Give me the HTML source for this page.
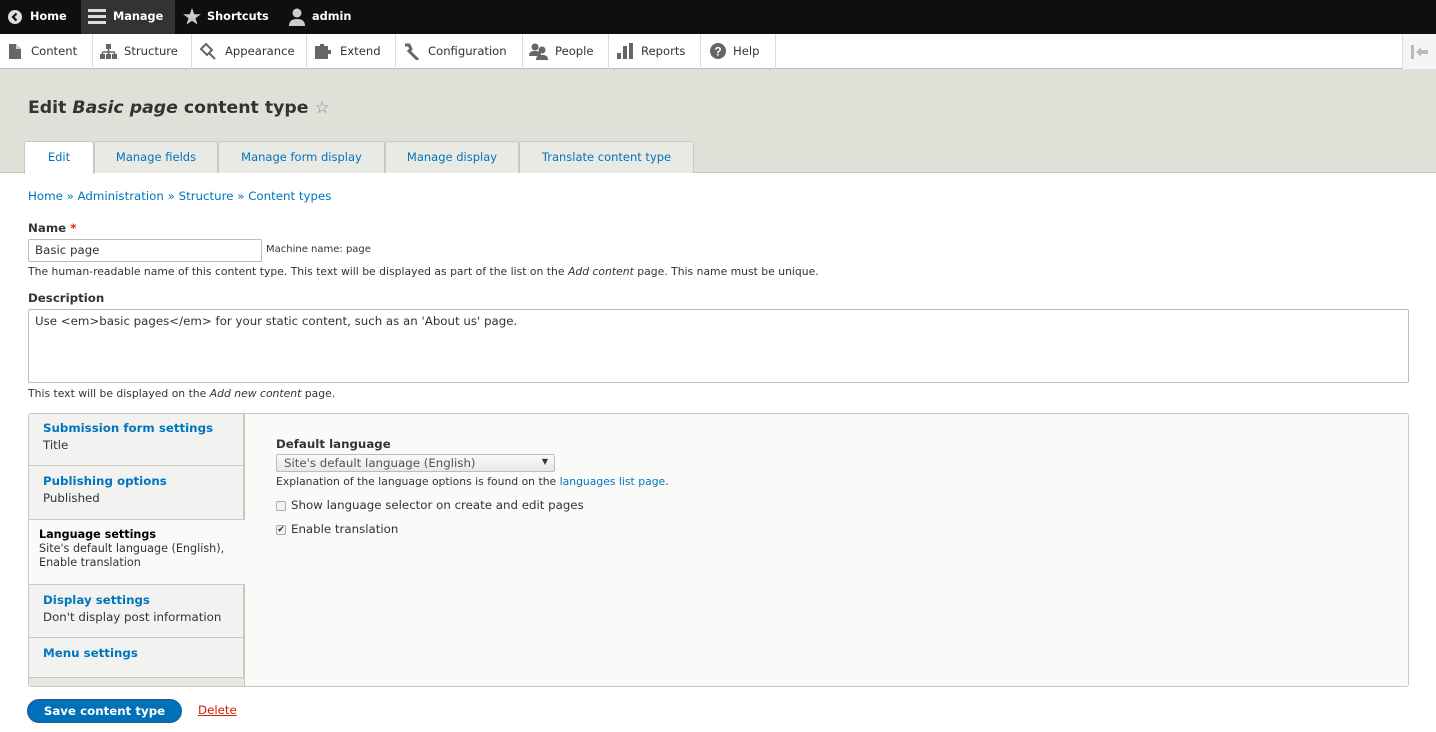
<!DOCTYPE html>
<html><head><meta charset="utf-8"><style>
*{box-sizing:border-box;margin:0;padding:0}
body{width:1436px;height:732px;overflow:hidden;background:#fff;font-family:"DejaVu Sans","Liberation Sans",sans-serif;font-size:11.8px;color:#333;position:relative}
.a{position:absolute;white-space:nowrap}
a,.lnk{color:#0074bd;text-decoration:none}
#tb{position:absolute;left:0;top:0;width:1436px;height:34px;background:#0f0f0f}
#tb .a{color:#fff;font-weight:bold;font-size:11.3px;top:10px}
#tray{position:absolute;left:0;top:34px;width:1436px;height:35px;background:#fff;border-bottom:1px solid #bbb;box-shadow:0 1px 2px rgba(0,0,0,.25)}
.sep{position:absolute;top:0;width:1px;height:35px;background:#ddd}
#tray .a{top:10px;font-size:11.6px;color:#333}
#hd{position:absolute;left:0;top:69px;width:1436px;height:104px;background:#e0e0d8;border-bottom:1px solid #c8c8c0}
.tab{position:absolute;top:141px;height:32px;background:#eaeae4;border:1px solid #c8c8c0;border-bottom:none;color:#0074bd;text-align:center;line-height:30px;font-size:11.5px;border-radius:3px 3px 0 0}
.vt{position:absolute;left:29px;width:215px;background:#f2f2f0;border-bottom:1px solid #c8c8c0;border-right:1px solid #c8c8c0;line-height:17px}
.vt b{color:#0074bd;display:block;font-size:11.8px}
</style></head><body>
<div id="tb">
<svg class="a" style="left:8px;top:10px" width="14" height="14" viewBox="0 0 14 14"><circle cx="7" cy="7" r="7" fill="#ddd"/><path d="M8.5 3.5L5 7l3.5 3.5" stroke="#0f0f0f" stroke-width="2.2" fill="none"/></svg>
<span class="a" style="left:30px">Home</span>
<div style="position:absolute;left:81px;top:0;width:94px;height:34px;background:#333"></div>
<svg class="a" style="left:88px;top:9px" width="18" height="15"><rect y="0" width="18" height="3" fill="#ddd"/><rect y="6" width="18" height="3" fill="#ddd"/><rect y="12" width="18" height="3" fill="#ddd"/></svg>
<span class="a" style="left:113px">Manage</span>
<svg class="a" style="left:183px;top:8px" width="18" height="17" viewBox="0 0 24 23"><path d="M12 0l3 8.5h9l-7.3 5.3 2.8 8.7L12 17.2 4.5 22.5l2.8-8.7L0 8.5h9z" fill="#ccc"/></svg>
<span class="a" style="left:207px">Shortcuts</span>
<svg class="a" style="left:289px;top:8px" width="16" height="18" viewBox="0 0 16 18"><circle cx="8" cy="5" r="4.5" fill="#ccc"/><path d="M0 18c0-5 3-7 8-7s8 2 8 7z" fill="#ccc"/></svg>
<span class="a" style="left:312px">admin</span>
</div>
<div id="tray">
<svg class="a" style="left:9px;top:10px;position:absolute" width="12" height="15"><path d="M0 0h7l5 5v10H0z" fill="#666"/><path d="M7 0v5h5" fill="#ccc"/></svg>
<span class="a" style="left:31px">Content</span><div class="sep" style="left:92px"></div>
<svg class="a" style="left:100px;top:10px;position:absolute" width="17" height="15"><rect x="6" y="0" width="5" height="5" fill="#666"/><path d="M8.5 5v3M2.5 8h12M2.5 8v3M8.5 8v3M14.5 8v3" stroke="#666" stroke-width="1.5" fill="none"/><rect x="0" y="10" width="5" height="5" fill="#666"/><rect x="6" y="10" width="5" height="5" fill="#666"/><rect x="12" y="10" width="5" height="5" fill="#666"/></svg>
<span class="a" style="left:124px">Structure</span><div class="sep" style="left:191px"></div>
<svg class="a" style="left:200px;top:9px;position:absolute" width="17" height="17"><path d="M1 6l5-5 6 6-5 5zM9 10l6 6" stroke="#666" stroke-width="2" fill="none"/></svg>
<span class="a" style="left:225px">Appearance</span><div class="sep" style="left:306px"></div>
<svg class="a" style="left:315px;top:9px;position:absolute" width="18" height="16"><path d="M0 3h5V1h4v2h4v4h3v4h-3v5H0z" fill="#666"/></svg>
<span class="a" style="left:340px">Extend</span><div class="sep" style="left:395px"></div>
<svg class="a" style="left:403px;top:9px;position:absolute" width="18" height="17"><path d="M2 2l4 0 2 4-2 2 9 9" stroke="#666" stroke-width="3" fill="none"/></svg>
<span class="a" style="left:428px">Configuration</span><div class="sep" style="left:522px"></div>
<svg class="a" style="left:529px;top:9px;position:absolute" width="20" height="17"><circle cx="6" cy="4" r="3.5" fill="#666"/><path d="M0 13c0-4 2-5 6-5s6 1 6 5z" fill="#666"/><circle cx="13" cy="7" r="3.5" fill="#666"/><path d="M7 17c0-4 2-5 6-5s6 1 6 5z" fill="#666"/></svg>
<span class="a" style="left:555px">People</span><div class="sep" style="left:608px"></div>
<svg class="a" style="left:617px;top:9px;position:absolute" width="18" height="16"><rect x="0" y="10" width="4" height="6" fill="#666"/><rect x="6" y="3" width="4" height="13" fill="#666"/><rect x="12" y="0" width="4" height="16" fill="#666"/></svg>
<span class="a" style="left:641px">Reports</span><div class="sep" style="left:700px"></div>
<svg class="a" style="left:710px;top:9px;position:absolute" width="16" height="16"><circle cx="8" cy="8" r="8" fill="#666"/><text x="8" y="12.5" font-size="12" font-weight="bold" fill="#fff" text-anchor="middle" font-family="Liberation Sans">?</text></svg>
<span class="a" style="left:733px">Help</span><div class="sep" style="left:775px"></div>
<div style="position:absolute;left:1402px;top:0;width:34px;height:35px;background:#f5f5f5;border-left:1px solid #ddd"></div>
<svg class="a" style="left:1411px;top:11px;position:absolute" width="18" height="14"><rect x="0" y="0" width="3" height="14" fill="#bbb"/><path d="M5 7l5-5v3h7v4h-7v3z" fill="#bbb"/></svg>
</div>
<div id="hd"></div>
<div class="a" style="left:28px;top:98px;font-size:17.3px;font-weight:bold;color:#333">Edit <i>Basic page</i> content type <span style="font-weight:normal;color:#888;font-size:17px">☆</span></div>
<div class="tab" style="left:24px;width:70px;background:#fff;height:33px">Edit</div>
<div class="tab" style="left:94px;width:124px">Manage fields</div>
<div class="tab" style="left:218px;width:167px">Manage form display</div>
<div class="tab" style="left:385px;width:134px">Manage display</div>
<div class="tab" style="left:519px;width:175px">Translate content type</div>
<div class="a lnk" style="left:28px;top:189px">Home » Administration » Structure » Content types</div>
<div class="a" style="left:28px;top:221px;font-weight:bold">Name <span style="color:#e32700">*</span></div>
<div class="a" style="left:28px;top:239px;width:234px;height:23px;border:1px solid #bbb;border-radius:2px;padding:3px 6px">Basic page</div>
<div class="a" style="left:266px;top:244px;font-size:10px">Machine name: page</div>
<div class="a" style="left:28px;top:265px;font-size:10.8px">The human-readable name of this content type. This text will be displayed as part of the list on the <i>Add content</i> page. This name must be unique.</div>
<div class="a" style="left:28px;top:291px;font-weight:bold">Description</div>
<div class="a" style="left:28px;top:309px;width:1381px;height:74px;border:1px solid #bbb;border-radius:2px;padding:4px 6px">Use &lt;em&gt;basic pages&lt;/em&gt; for your static content, such as an 'About us' page.</div>
<div class="a" style="left:28px;top:387px;font-size:10.8px">This text will be displayed on the <i>Add new content</i> page.</div>
<div style="position:absolute;left:28px;top:413px;width:1381px;height:274px;border:1px solid #c8c8c0;border-radius:3px;background:#fafaf9"></div>
<div style="position:absolute;left:29px;top:414px;width:216px;height:272px;background:#e6e6e2;border-right:1px solid #c8c8c0"></div>
<div class="vt" style="top:414px;height:52px;padding:6px 14px"><b>Submission form settings</b>Title</div>
<div class="vt" style="top:466px;height:54px;padding:7px 14px"><b>Publishing options</b>Published</div>
<div style="position:absolute;left:29px;top:520px;width:216px;height:65px;background:#fafaf9;padding:8px 10px;font-size:11.2px;line-height:14px;border-bottom:1px solid #c8c8c0;white-space:nowrap"><b style="color:#000">Language settings</b><br>Site's default language (English),<br>Enable translation</div>
<div class="vt" style="top:585px;height:53px;padding:7px 14px"><b>Display settings</b>Don't display post information</div>
<div class="vt" style="top:638px;height:40px;padding:7px 14px"><b>Menu settings</b></div>
<div class="a" style="left:276px;top:437px;font-weight:bold">Default language</div>
<div class="a" style="left:276px;top:454px;width:279px;height:18px;border:1px solid #bbb;border-radius:2px;background:linear-gradient(#fafafa,#e8e8e8);padding:1px 7px;color:#555">Site's default language (English)<span style="position:absolute;right:6px;top:2px;font-size:8px;color:#333">▼</span></div>
<div class="a" style="left:276px;top:475px;font-size:10.8px">Explanation of the language options is found on the <span class="lnk">languages list page</span>.</div>
<div class="a" style="left:276px;top:501px;width:10px;height:10px;border:1px solid #aaa;border-radius:2px;background:#f4f4f4"></div>
<div class="a" style="left:291px;top:498px">Show language selector on create and edit pages</div>
<div class="a" style="left:276px;top:525px;width:10px;height:10px;border:1px solid #aaa;border-radius:2px;background:#f4f4f4;font-size:9px;line-height:8px;text-align:center">✔</div>
<div class="a" style="left:291px;top:522px">Enable translation</div>
<div class="a" style="left:27px;top:699px;width:155px;height:24px;border-radius:12px;background:#0071b8;border:1px solid #1e5c90;color:#fff;font-weight:bold;text-align:center;line-height:22px;font-size:11.8px">Save content type</div>
<div class="a" style="left:198px;top:703px;color:#c72100;text-decoration:underline">Delete</div>
</body></html>
